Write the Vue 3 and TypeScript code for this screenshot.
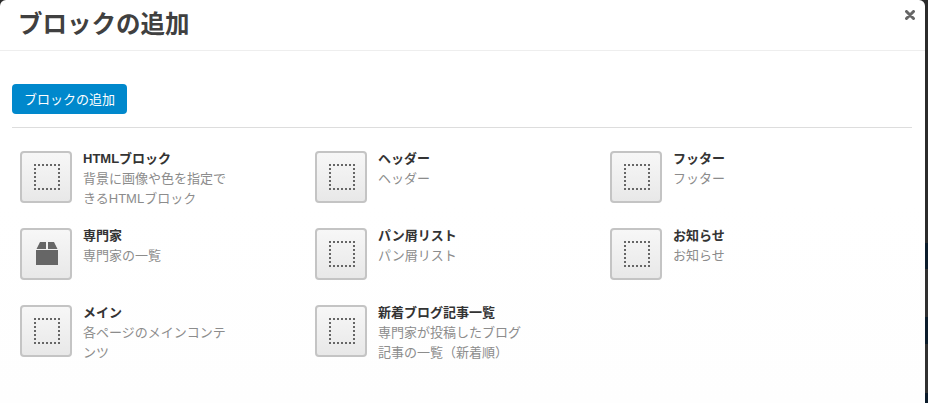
<script setup lang="ts">
interface Block {
  name: string
  desc: string
  icon?: 'box'
}
const blocks: Block[] = [
  { name: 'HTMLブロック', desc: '背景に画像や色を指定できるHTMLブロック' },
  { name: 'ヘッダー', desc: 'ヘッダー' },
  { name: 'フッター', desc: 'フッター' },
  { name: '専門家', desc: '専門家の一覧', icon: 'box' },
  { name: 'パン屑リスト', desc: 'パン屑リスト' },
  { name: 'お知らせ', desc: 'お知らせ' },
  { name: 'メイン', desc: '各ページのメインコンテンツ' },
  { name: '新着ブログ記事一覧', desc: '専門家が投稿したブログ記事の一覧（新着順）' },
]
</script>

<template>
  <div class="page">
    <div class="modal">
      <header class="head">
        <h1 class="title">ブロックの追加</h1>
        <svg class="close" width="10" height="10" viewBox="0 0 10 10" aria-label="閉じる">
          <path d="M1.500 1.500L8.500 8.500M8.500 1.500L1.500 8.500" stroke="#666" stroke-width="3" stroke-linecap="round" />
        </svg>
      </header>
      <section class="body">
        <button class="add" type="button">ブロックの追加</button>
        <div class="rule"></div>
        <ul class="grid">
          <li v-for="b in blocks" :key="b.name" class="item">
            <div class="tile">
              <svg v-if="b.icon === 'box'" width="24" height="24" viewBox="0 0 24 24">
                <path d="M6 0H12V7H2.500Z M14 0H20L23.500 7H14Z" fill="#666" />
                <rect x="2" y="8" width="22" height="15" fill="#666" />
              </svg>
              <svg v-else class="dotted" width="26" height="26" viewBox="0 0 26 26">
                <path
                  d="M0 1H26M0 25H26M1 0V26M25 0V26"
                  fill="none"
                  stroke="#666"
                  stroke-width="2"
                  stroke-dasharray="2 2"
                  shape-rendering="crispEdges"
                />
              </svg>
            </div>
            <div class="text">
              <div class="name">{{ b.name }}</div>
              <div class="desc">{{ b.desc }}</div>
            </div>
          </li>
        </ul>
      </section>
    </div>
  </div>
</template>

<style>
html, body { margin: 0; background: #2e2e2e; }
</style>

<style scoped>
.page {
  width: 928px;
  height: 403px;
  overflow: hidden;
  font-family: "Liberation Sans", "Noto Sans CJK JP", sans-serif;
  background: linear-gradient(180deg,
    #2b2b2b 0 243px,
    #0b1c2b 243px 269px,
    #303030 269px 317px,
    #0b1c2b 317px 344px,
    #303030 344px 393px,
    #0b1c2b 393px 403px);
}
.modal {
  width: 925px;
  height: 403px;
  background: linear-gradient(180deg, #fff 200px, #fefefe 403px);
  border-radius: 6px 6px 0 0;
}
.head {
  height: 50px;
  border-bottom: 1px solid #eee;
  display: flex;
  justify-content: space-between;
  align-items: flex-start;
  padding: 0 10px 0 18px;
}
.title {
  margin: 9px 0 0;
  font-size: 24.5px;
  line-height: 32px;
  font-weight: 700;
  color: #404040;
}
.close {
  margin-top: 10px;
}
.body {
  padding: 33px 13px 0 12px;
}
.add {
  display: block;
  width: 115px;
  height: 30px;
  padding: 0 0 2px;
  border: 0;
  border-radius: 4px;
  background: #0088cc;
  color: #fff;
  font: inherit;
  font-size: 13px;
}
.rule {
  margin-top: 13px;
  height: 1px;
  background: #ddd;
}
.grid {
  list-style: none;
  margin: 23px 0 0;
  padding: 0 0 0 8px;
  display: grid;
  grid-template-columns: repeat(3, 295px);
  grid-auto-rows: 77px;
}
.item {
  display: flex;
  gap: 11px;
}
.tile {
  box-sizing: border-box;
  flex: none;
  width: 52px;
  height: 52px;
  border: 2px solid #c4c4c4;
  border-radius: 4px;
  background: linear-gradient(180deg, #f7f7f7, #e8e8e8);
  display: flex;
  align-items: center;
  justify-content: center;
}
.dotted {
  margin-left: 2px;
}
.text {
  width: 146px;
  margin-top: -2px;
  line-height: 20px;
  font-size: 13px;
}
.name {
  font-weight: 700;
  color: #333;
}
.desc {
  color: #8c8c8c;
}
</style>
